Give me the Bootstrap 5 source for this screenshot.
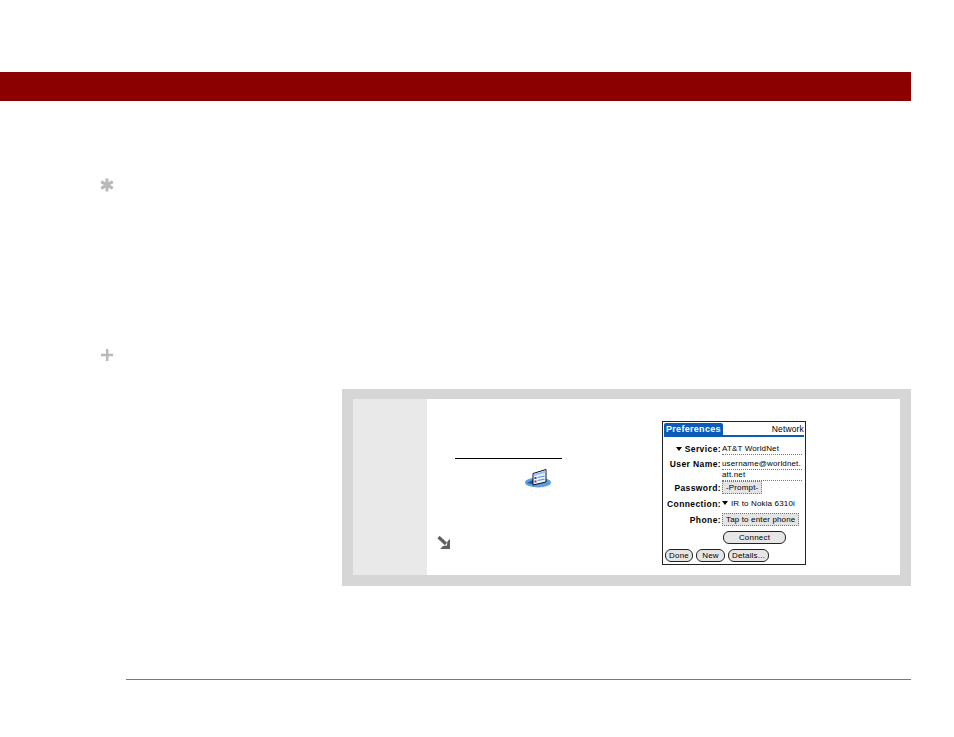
<!DOCTYPE html>
<html lang="en">
<head>
  <meta charset="UTF-8" />
  <title>Network Preferences</title>
  <link href="https://cdn.jsdelivr.net/npm/bootstrap@5.3.0/dist/css/bootstrap.min.css" rel="stylesheet"/>
  <style>
    body { background: #fff; width: 954px; height: 737px; overflow: hidden; font-family: "Liberation Sans", Arial, sans-serif; }
    .page-wrap { width: 911px; padding-top: 72px; }
    .red-bar { height: 29px; background: #8b0000; }
    .side-marks { width: 342px; height: 288px; padding: 77px 0 0 100px; }
    .mark-gap { height: 156px; }
    .side-marks svg { display: block; }
    .step-box { width: 569px; height: 197px; margin-left: 342px; padding: 10px 11px 11px; background: #d6d6d6; }
    .step-num { width: 74px; background: #e9e9e9; }
    .step-main { padding: 22px 0 0 28px; background: #fff; }
    .step-left { width: 207px; }
    .rule-link { width: 107px; height: 1px; margin-top: 37px; background: #000; }
    .app-icon { display: block; margin: 9px 0 0 70px; }
    .tip-arrow { display: block; margin: 48px 0 0 -18px; }
    .palm { width: 144px; height: 144px; padding: 1px 1px 0; border: 1px solid #222; background: #fff; color: #000; font-size: 8px; line-height: 10px; letter-spacing: .15px; }
    .palm-head { height: 14px; border-bottom: 2px solid #0a5cb8; }
    .palm-tab { padding: 0 2px; background: #0a5cb8; color: #fff; border-radius: 2px 2px 0 0; font-weight: 700; font-size: 9px; letter-spacing: .3px; line-height: 12px; }
    .palm-title { font-size: 8.5px; line-height: 12px; }
    .palm-form { display: grid; grid-template-columns: 57px 80px; column-gap: 1px; margin-top: 7px; }
    .palm-form > b { text-align: right; white-space: nowrap; font-size: 8.5px; letter-spacing: .4px; }
    .palm-val { white-space: nowrap; }
    .dotted { border-bottom: 1px dotted #777; height: 11px; }
    .row-a { margin-bottom: 4px; }
    .row-b { margin-bottom: 3px; height: 21px; }
    .row-c { margin-bottom: 5px; }
    .row-d { margin-bottom: 6px; }
    .tri { display: inline-block; width: 0; height: 0; margin: 0 3px 1px 0; border: 3.5px solid transparent; border-top: 4px solid #000; border-bottom: 0; }
    .fld { display: inline-block; height: 13px; padding: 1px 3px; margin-top: -2px; background: #e4e4e4; border: 1px dotted #777; line-height: 10px; }
    .palm-btn { display: block; padding: 0; height: 13px; line-height: 10px; background: #e6e6e6; color: #000; border: 1px solid #222; border-radius: 6px; font-size: 8px; letter-spacing: .2px; }
    .connect-btn { width: 63px; margin: 0 0 0 59px; }
    .palm-foot { margin-top: 5px; padding-left: 1px; }
    .btn-done { width: 28px; }
    .btn-new { width: 29px; margin-left: 3px; }
    .btn-details { width: 41px; margin-left: 3px; }
    .foot-rule { width: 785px; height: 1px; margin: 93px 0 0 126px; background: #7a7a7a; }
  </style>
</head>
<body>
  <div class="page-wrap">
    <div class="red-bar"></div>

    <div class="side-marks">
      <svg width="14" height="14" viewBox="0 0 14 14"><g stroke="#b9b9b9" stroke-width="3"><path d="M7 .5v13M1.2 3.6l11.6 6.8M12.8 3.6 1.2 10.4"/></g></svg>
      <div class="mark-gap"></div>
      <svg width="14" height="14" viewBox="0 0 14 14"><path d="M6 1h2.400v12H6zM1 5.800h12v2.400H1z" fill="#b9b9b9"/></svg>
    </div>

    <div class="step-box d-flex">
      <div class="step-num"></div>
      <div class="step-main flex-grow-1 d-flex">
        <div class="step-left">
          <div class="rule-link"></div>
          <svg class="app-icon" width="27" height="20" viewBox="0 0 27 20">
            <ellipse cx="13" cy="14.500" rx="13" ry="5" fill="#5c9fdc"/>
            <path d="M2 15l6-3v4z" fill="#1d4e9e"/>
            <path d="M8 5.500 21 1.500v12.500L8 17z" fill="#eef5ff" stroke="#0b1020" stroke-width="1"/>
            <path d="M9 6 20.500 2.500V5L9 8z" fill="#9cc2f0"/>
            <path d="M12.500 9.500l7-1.300M12.500 12.500l7-1.300" stroke="#5a97e0" stroke-width="1.200"/>
            <path d="M9.500 9h2v2h-2z" fill="#2a4f9e"/><path d="M9.500 12.500h2v2h-2z" fill="#b02a3a"/>
          </svg>
          <svg class="tip-arrow" width="14" height="13" viewBox="0 0 14 13"><path d="M1.500 1 9 8" stroke="#5f5f5f" stroke-width="3.200"/><path d="M13 3v10H3l3-3 4-.5.300-4z" fill="#5f5f5f"/></svg>
        </div>

        <div class="palm">
          <div class="palm-head d-flex justify-content-between">
            <span class="palm-tab">Preferences</span>
            <span class="palm-title">Network</span>
          </div>
          <div class="palm-form">
            <b class="row-a"><span class="tri"></span>Service:</b>
            <div class="palm-val dotted row-a">AT&amp;T WorldNet</div>
            <b>User Name:</b>
            <div class="palm-val row-b"><div class="dotted">username@worldnet.</div><div class="dotted">att.net</div></div>
            <b class="row-c">Password:</b>
            <div class="palm-val row-c"><span class="fld">-Prompt-</span></div>
            <b class="row-d">Connection:</b>
            <div class="palm-val row-d"><span class="tri"></span>IR to Nokia 6310i</div>
            <b class="row-c">Phone:</b>
            <div class="palm-val row-c"><span class="fld">Tap to enter phone</span></div>
          </div>
          <button class="palm-btn connect-btn">Connect</button>
          <div class="palm-foot d-flex">
            <button class="palm-btn btn-done">Done</button>
            <button class="palm-btn btn-new">New</button>
            <button class="palm-btn btn-details">Details...</button>
          </div>
        </div>
      </div>
    </div>

    <div class="foot-rule"></div>
  </div>
  <script src="https://cdn.jsdelivr.net/npm/bootstrap@5.3.0/dist/js/bootstrap.bundle.min.js"></script>
</body>
</html>
